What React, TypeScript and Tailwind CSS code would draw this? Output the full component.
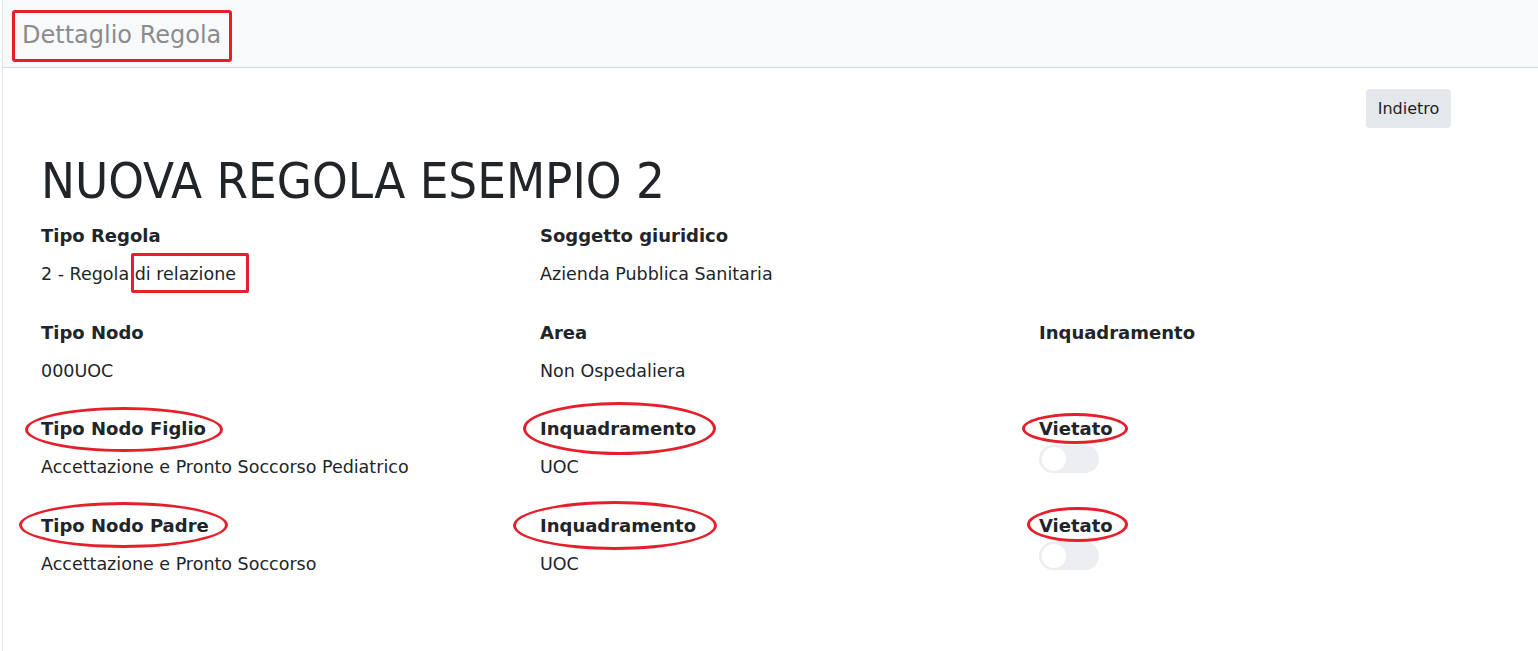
import React from "react";

const Toggle = () => (
  <div className="mt-[3px] h-[28px] w-[60px] rounded-full bg-[#eceef1] px-[3px] flex items-center">
    <div className="h-[24px] w-[24px] rounded-full bg-white" />
  </div>
);

const Field = ({ label, value, children }: { label: string; value?: string; children?: React.ReactNode }) => (
  <div className="h-[96.6px]">
    <div className="font-bold text-[18px] text-[#212529] leading-[27px]">{label}</div>
    {value !== undefined && <div className="mt-[12px] text-[17.5px] leading-[27px] text-[#212529]">{value}</div>}
    {children}
  </div>
);

const Ellipse = ({ cls }: { cls: string }) => (
  <div className={"absolute rounded-[50%] border-[3px] border-[#e51f2b] pointer-events-none " + cls} />
);

export default function App() {
  return (
    <div className="relative min-h-[651px] bg-white pl-[2px]" style={{ fontFamily: '"DejaVu Sans", sans-serif' }}>
      <div className="border-l border-[#dde3ea] min-h-[651px]">
        <div className="h-[68px] bg-[#f8f9fb] border-b border-[#cdd9e3] pl-[19px] pt-[21px]">
          <span className="text-[24px] leading-[28px] text-[#8c8c8c] block">Dettaglio Regola</span>
        </div>
        <div className="flex justify-end pr-[87px] pt-[21px]">
          <button className="h-[39px] w-[85px] rounded-[4px] bg-[#e4e7eb] text-[16px] text-[#1e1e1e]">Indietro</button>
        </div>
        <div className="pl-[38px]">
          <h1
            className="text-[50.5px] leading-[60px] text-[#212529] mt-[23px] mb-[11px]"
            style={{ fontFamily: '"DejaVu Sans Condensed", "DejaVu Sans", sans-serif' }}
          >
            NUOVA REGOLA ESEMPIO 2
          </h1>
          <div className="grid grid-cols-[499px_499px_499px]">
            <Field label="Tipo Regola" value="2 - Regola di relazione" />
            <Field label="Soggetto giuridico" value="Azienda Pubblica Sanitaria" />
            <div />
            <Field label="Tipo Nodo" value="000UOC" />
            <Field label="Area" value="Non Ospedaliera" />
            <Field label="Inquadramento" />
            <Field label="Tipo Nodo Figlio" value="Accettazione e Pronto Soccorso Pediatrico" />
            <Field label="Inquadramento" value="UOC" />
            <Field label="Vietato"><Toggle /></Field>
            <Field label="Tipo Nodo Padre" value="Accettazione e Pronto Soccorso" />
            <Field label="Inquadramento" value="UOC" />
            <Field label="Vietato"><Toggle /></Field>
          </div>
        </div>
      </div>

      {/* red annotation marks */}
      <div className="absolute left-[12px] top-[10px] w-[220px] h-[52px] border-[3px] border-[#e51f2b] rounded-[3px] pointer-events-none" />
      <div className="absolute left-[131px] top-[253px] w-[118px] h-[40px] border-[3px] border-[#e51f2b] rounded-[2px] pointer-events-none" />
      <Ellipse cls="left-[25px] top-[407px] w-[198px] h-[45px]" />
      <Ellipse cls="left-[19px] top-[502px] w-[209px] h-[46px]" />
      <Ellipse cls="left-[523px] top-[402px] w-[193px] h-[53px]" />
      <Ellipse cls="left-[513px] top-[501px] w-[204px] h-[49px]" />
      <Ellipse cls="left-[1022px] top-[413px] w-[106px] h-[31px]" />
      <Ellipse cls="left-[1027px] top-[507px] w-[101px] h-[35px]" />
    </div>
  );
}
